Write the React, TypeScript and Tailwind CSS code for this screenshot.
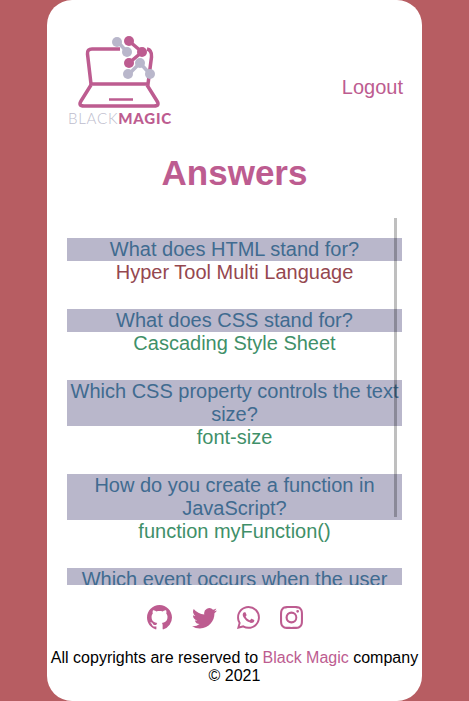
import { BsGithub, BsTwitter, BsWhatsapp, BsInstagram } from 'react-icons/bs';

const answers = [
  { q: 'What does HTML stand for?', a: 'Hyper Tool Multi Language', ok: false },
  { q: 'What does CSS stand for?', a: 'Cascading Style Sheet', ok: true },
  { q: 'Which CSS property controls the text size?', a: 'font-size', ok: true },
  { q: 'How do you create a function in JavaScript?', a: 'function myFunction()', ok: true },
  { q: 'Which event occurs when the user clicks on an HTML element?', a: 'onclick', ok: true },
];

function Logo() {
  return (
    <div className="flex flex-col items-center w-[104px]">
      <svg viewBox="68 36 104 74" className="w-[104px] h-[74px] blur-[0.3px]" fill="none">
        <path d="M120 49 H92 Q87 49 87.5 54 L91 84 H148 L151.5 57 Q152 50 147 49" stroke="#bd5c90" strokeWidth="3.5" />
        <path d="M91 85 L81 101 Q78 106 84 106 H154 Q160 106 157 101 L147 85" stroke="#bd5c90" strokeWidth="3.5" />
        <path d="M109 99.5 H133" stroke="#bd5c90" strokeWidth="2.5" />
        <g stroke="#b9b7cb" strokeWidth="3.5">
          <path d="M118 42 L127 52" />
          <path d="M129 74 L140 63 L150 74" />
        </g>
        <path d="M129 41 L142 52 L129 63" stroke="#bd5c90" strokeWidth="3.5" />
        <g fill="#b9b7cb">
          <circle cx="117" cy="42" r="5" />
          <circle cx="127" cy="52" r="5" />
          <circle cx="140" cy="63" r="5" />
          <circle cx="128" cy="74" r="5" />
          <circle cx="150" cy="74" r="5" />
        </g>
        <g fill="#bd5c90">
          <circle cx="129" cy="41" r="5" />
          <circle cx="142" cy="52" r="5" />
          <circle cx="129" cy="63" r="5" />
        </g>
      </svg>
      <div className="text-[15px] leading-[16px] whitespace-nowrap tracking-[0.8px] font-['Lato',sans-serif]">
        <span className="text-[#bdbccd] font-light">BLACK</span>
        <span className="text-[#bd5c90] font-black">MAGIC</span>
      </div>
    </div>
  );
}

export default function App() {
  return (
    <div className="h-[701px] overflow-hidden bg-[#b75d62] font-['Liberation_Sans',Arial,sans-serif]">
      <div className="relative flex flex-col ml-[47px] w-[375px] h-[701px] bg-white rounded-[25px]">
        <header className="flex items-start justify-between pl-[21px] pr-[19px] pt-[36px] h-[138px]">
          <Logo />
          <a href="#" className="text-[20px] leading-[23px] text-[#bd5c90] mt-[40px]">Logout</a>
        </header>

        <h1 className="text-center text-[35px] leading-[40px] font-bold text-[#bd5c90] mt-[15px]">Answers</h1>

        <div className="relative mt-[25px] h-[367px] overflow-hidden px-[20px] pt-[20px] text-center text-[20px] leading-[23px]">
          {answers.map((item) => (
            <div key={item.q} className="mb-[25px]">
              <div className="bg-[#b9b7cb] text-[#406b90]">{item.q}</div>
              <div className={item.ok ? 'text-[#3f9069]' : 'text-[#95474f]'}>{item.a}</div>
            </div>
          ))}
          <div className="absolute top-0 right-[25px] w-[3px] h-[299px] bg-[#00000040]" />
        </div>

        <div className="flex justify-center items-center mt-[20px] text-[#bd5c90]">
          <BsGithub size={25} className="mr-[20px]" />
          <BsTwitter size={25} className="mr-[20px]" />
          <BsWhatsapp size={23} className="mr-[20px]" />
          <BsInstagram size={23} className="mr-[20px]" />
        </div>

        <p className="mt-[19px] text-center text-[16px] leading-[18px] text-black">
          All copyrights are reserved to <span className="text-[#bd5c90]">Black Magic</span> company © 2021
        </p>
      </div>
    </div>
  );
}
